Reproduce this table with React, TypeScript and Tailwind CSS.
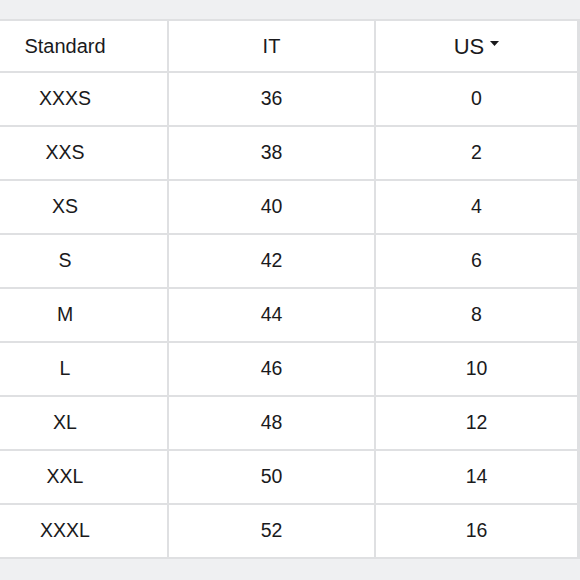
import React from 'react';

const rows = [
    ['XXXS', '36', '0'],
    ['XXS', '38', '2'],
    ['XS', '40', '4'],
    ['S', '42', '6'],
    ['M', '44', '8'],
    ['L', '46', '10'],
    ['XL', '48', '12'],
    ['XXL', '50', '14'],
    ['XXXL', '52', '16'],
];

export default function App() {
    return (
        <div className="w-[580px] h-[580px] overflow-hidden bg-[#eff0f2] pt-[19px] text-[#1a1a1c]" style={{ fontFamily: '"Liberation Sans", Arial, sans-serif' }}>
            <div className="ml-[-39px] w-[619px] grid grid-cols-[204px_205px_201px] gap-[2px] p-[2px] bg-[#dfe0e2]">
                {/* header */}
                <div className="h-[50px] bg-white flex items-center justify-center text-[20px]">Standard</div>
                <div className="h-[50px] bg-white flex items-center justify-center text-[20px]">IT</div>
                <div className="h-[50px] bg-white flex items-center justify-center gap-[6px] text-[22px]">
                    <span>US</span>
                    <svg width="9" height="5" viewBox="0 0 9 5" className="mt-[-5px]">
                        <path d="M0 0 H9 L4.5 5 Z" fill="#1a1a1c" />
                    </svg>
                </div>

                {rows.map(r => (
                    <React.Fragment key={r[0]}>
                        <div className="h-[52px] bg-white flex items-center justify-center text-[19.5px]">{r[0]}</div>
                        <div className="h-[52px] bg-white flex items-center justify-center text-[19.5px]">{r[1]}</div>
                        <div className="h-[52px] bg-white flex items-center justify-center text-[19.5px]">{r[2]}</div>
                    </React.Fragment>
                ))}
            </div>
        </div>
    );
}
